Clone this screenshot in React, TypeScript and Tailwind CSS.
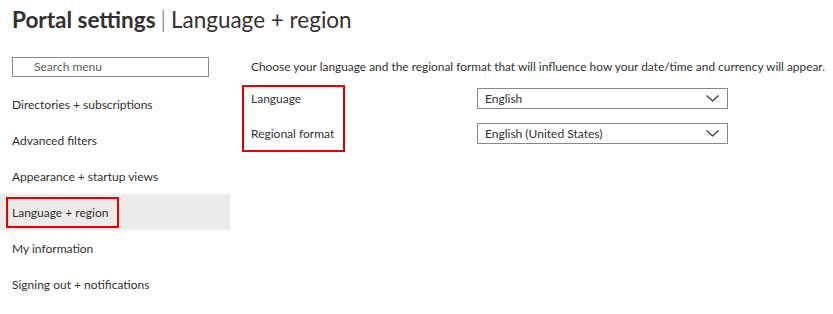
import { ReactNode } from "react";

const menuItems = [
  "Directories + subscriptions",
  "Advanced filters",
  "Appearance + startup views",
  "Language + region",
  "My information",
  "Signing out + notifications",
];

const Chevron = () => (
  <svg width="13" height="7" viewBox="0 0 13 7" fill="none">
    <polyline points="0.5,0.5 6.5,6 12.5,0.5" stroke="#323130" strokeWidth="1.1" />
  </svg>
);

const Dropdown = ({ value }: { value: string }) => (
  <div className="flex h-[21px] w-[251px] items-center justify-between border border-[#8a8886] pl-[7px] pr-[8px] text-[12px] text-[#323130]">
    <span>{value}</span>
    <Chevron />
  </div>
);

const Label = ({ children }: { children: ReactNode }) => (
  <div className="flex h-[24px] items-center whitespace-nowrap pl-[7px] text-[12px] text-[#323130]">{children}</div>
);

export default function App() {
  return (
    <div
      className="h-[314px] w-[833px] overflow-hidden whitespace-nowrap bg-white text-[#323130]"
      style={{ fontFamily: 'Lato, "Noto Sans", sans-serif' }}
    >
      {/* header */}
      <div className="flex h-[40px] items-center pl-[12px] pt-[1px] text-[22.5px] leading-none">
        <span className="font-bold">Portal settings</span>
        <span className="mx-[5px] font-light text-[#605e5c]">|</span>
        <span className="font-normal">Language + region</span>
      </div>

      <div className="flex">
        {/* sidebar */}
        <div className="flex w-[230px] shrink-0 flex-col pt-[17px]">
          <div className="ml-[12px] flex h-[20px] w-[197px] items-center border border-[#8a8886] pl-[21px] text-[12px] text-[#605e5c]">
            Search menu
          </div>
          <div className="mt-[9px] flex flex-col">
            {menuItems.map((item) => {
              const active = item === "Language + region";
              return (
                <div
                  key={item}
                  className={
                    active
                      ? "flex h-[36px] items-center bg-[#edebe9] pl-[6px] pt-[1px]"
                      : "flex h-[36px] items-center pl-[12px] pt-[1px] text-[12px]"
                  }
                >
                  {active ? (
                    <div className="flex h-[31px] w-[113px] items-center border-2 border-[#e00000] pl-[4px] text-[12px]">
                      {item}
                    </div>
                  ) : (
                    item
                  )}
                </div>
              );
            })}
          </div>
        </div>

        {/* content */}
        <div className="flex flex-col pl-[12px] pt-[17px]">
          <div className="pl-[9px] text-[11.9px] leading-[20px]">
            Choose your language and the regional format that will influence how your date/time and currency will appear.
          </div>
          <div className="mt-[8px] flex">
            <div className="flex h-[67px] w-[103px] flex-col gap-[11px] border-2 border-[#e00000] pt-0">
              <Label>Language</Label>
              <Label>Regional format</Label>
            </div>
            <div className="ml-[132px] mt-[3px] flex flex-col gap-[14px]">
              <Dropdown value="English" />
              <Dropdown value="English (United States)" />
            </div>
          </div>
        </div>
      </div>
    </div>
  );
}
